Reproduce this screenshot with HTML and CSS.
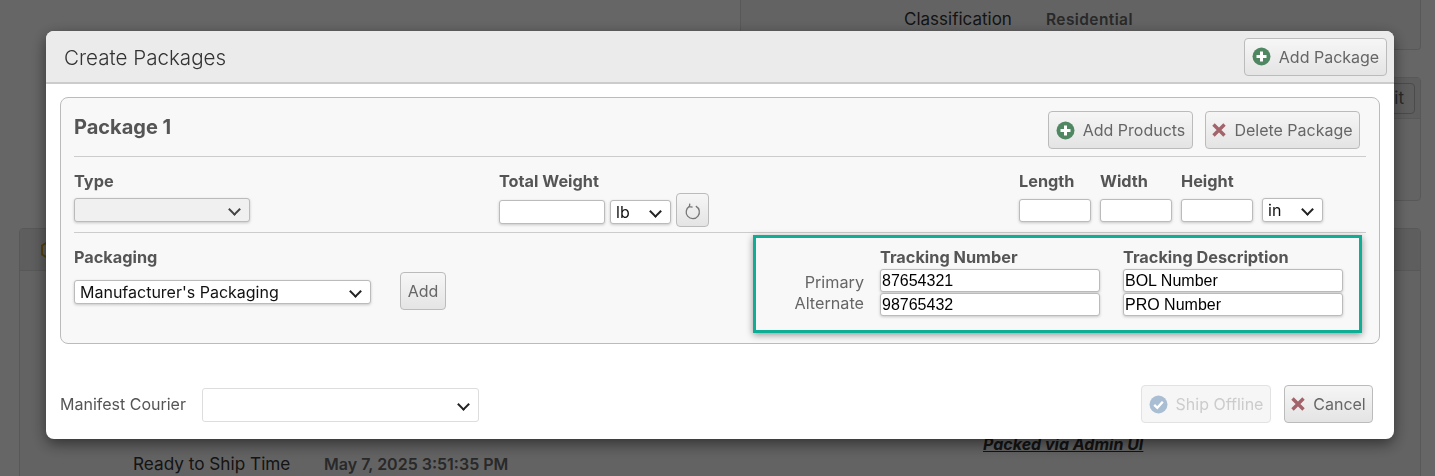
FILE: index.html
```html
<!DOCTYPE html>
<html lang="en">
<head>
<meta charset="utf-8">
<title>Create Packages</title>
<link rel="stylesheet" href="styles.css">
</head>
<body>
<div class="page">
  <div class="side-stack">
    <section class="bg-panel bg-panel-cut">
      <div class="class-row"><span class="class-name">Classification</span><strong class="class-value">Residential</strong></div>
    </section>
    <section class="bg-panel bg-panel-two">
      <div class="bg-head bg-head-short"><span class="bg-edit">Edit</span></div>
    </section>
  </div>
  <section class="bg-panel bg-panel-wide">
    <div class="bg-head">
      <svg class="bg-icon" width="18" height="20" viewBox="0 0 18 20"><path d="M9 1.500 16 5.500V14.500L9 18.500 2 14.500V5.500Z" fill="none" stroke="#d9a520" stroke-width="2"/></svg>
    </div>
    <div class="bg-body">
      <div class="bg-left"><span class="ship-name">Ready to Ship Time</span><strong class="ship-value">May 7, 2025 3:51:35 PM</strong></div>
      <div class="bg-right"><span class="packed">Packed via Admin UI</span></div>
    </div>
  </section>
</div>
<div class="overlay"></div>
<div class="modal">
  <header class="modal-head">
    <h1 class="modal-title">Create Packages</h1>
    <button class="btn btn-head" type="button">
      <svg class="ico" width="19" height="19" viewBox="0 0 19 19"><circle cx="9.500" cy="9.500" r="9" fill="#4f8763"/><path d="M9.500 4.500v10M4.500 9.500h10" stroke="#fff" stroke-width="3"/></svg>
      Add Package
    </button>
  </header>
  <div class="modal-body">
    <section class="pkg">
      <div class="pkg-top">
        <h2 class="pkg-title">Package 1</h2>
        <div class="pkg-actions">
          <button class="btn btn-products" type="button">
            <svg class="ico" width="19" height="19" viewBox="0 0 19 19"><circle cx="9.500" cy="9.500" r="9" fill="#4f8763"/><path d="M9.500 4.500v10M4.500 9.500h10" stroke="#fff" stroke-width="3"/></svg>
            Add Products
          </button>
          <button class="btn btn-delete" type="button">
            <svg class="ico" width="14" height="14" viewBox="0 0 14 14"><path d="M1.500 1.500 12.500 12.500M12.500 1.500 1.500 12.500" stroke="#a3636b" stroke-width="3.400"/></svg>
            Delete Package
          </button>
        </div>
      </div>
      <div class="pkg-fields">
        <div class="field">
          <label class="lbl">Type</label>
          <span class="sw sw-type"><select class="sel sel-type" disabled><option></option></select></span>
        </div>
        <div class="field">
          <label class="lbl">Total Weight</label>
          <div class="inline">
            <input class="inp inp-weight" type="text">
            <span class="sw sw-unit"><select class="sel sel-unit"><option>lb</option></select></span>
            <button class="btn btn-refresh" type="button" aria-label="Refresh">
              <svg width="16" height="17" viewBox="0 0 16 17"><path d="M10.800 3.200A6.600 6.600 0 1 1 4.400 3.400" fill="none" stroke="#777" stroke-width="1.300"/><path d="M4.800 .6 4.400 3.600 7.600 4.200" fill="none" stroke="#777" stroke-width="1.300"/></svg>
            </button>
          </div>
        </div>
        <div class="dims">
          <div class="field dim"><label class="lbl">Length</label><input class="inp inp-dim" type="text"></div>
          <div class="field dim"><label class="lbl">Width</label><input class="inp inp-dim" type="text"></div>
          <div class="field dim"><label class="lbl">Height</label><input class="inp inp-dim" type="text"></div>
          <span class="sw"><select class="sel sel-unit"><option>in</option></select></span>
        </div>
      </div>
      <div class="pkg-bottom">
        <div class="packaging">
          <div class="field">
            <label class="lbl lbl-pack">Packaging</label>
            <span class="sw sw-pack"><select class="sel sel-pack"><option>Manufacturer's Packaging</option></select></span>
          </div>
          <button class="btn btn-add" type="button">Add</button>
        </div>
        <div class="tracking">
          <span></span>
          <span class="lbl track-head">Tracking Number</span>
          <span class="lbl track-head">Tracking Description</span>
          <span class="track-name track-primary">Primary</span>
          <input class="inp inp-track" type="text" value="87654321">
          <input class="inp inp-track" type="text" value="BOL Number">
          <span class="track-name track-alt">Alternate</span>
          <input class="inp inp-track" type="text" value="98765432">
          <input class="inp inp-track" type="text" value="PRO Number">
        </div>
      </div>
    </section>
    <footer class="modal-foot">
      <label class="foot-lbl">Manifest Courier</label>
      <span class="sw sw-courier"><select class="sel sel-courier"><option></option></select></span>
      <div class="foot-actions">
        <button class="btn btn-ship" type="button" disabled>
          <svg class="ico" width="19" height="19" viewBox="0 0 19 19"><circle cx="9.500" cy="9.500" r="9" fill="#a9bed3"/><path d="M5.200 9.800 8.300 12.800 13.800 6.800" fill="none" stroke="#fff" stroke-width="2.400"/></svg>
          Ship Offline
        </button>
        <button class="btn btn-cancel" type="button">
          <svg class="ico" width="14" height="14" viewBox="0 0 14 14"><path d="M1.500 1.500 12.500 12.500M12.500 1.500 1.500 12.500" stroke="#a3636b" stroke-width="3.400"/></svg>
          Cancel
        </button>
      </div>
    </footer>
  </div>
</div>
</body>
</html>
```

FILE: styles.css
```css
* { box-sizing: border-box; }
html, body { margin: 0; height: 476px; overflow: hidden; background: #fff; }
body { font-family: Inter, "Liberation Sans", sans-serif; color: #333; }

/* page behind the dialog */
.page { height: 476px; padding: 0 14px 0 19px; overflow: hidden; }
.side-stack { margin-left: 721px; }
.bg-panel { background: #f8f8f8; border: 1px solid #ddd; border-radius: 4px; }
.bg-panel-cut { height: 50px; border-top: 0; border-radius: 0 0 4px 4px; }
.bg-panel-two { height: 124px; margin-top: 27px; }
.class-row { display: flex; padding: 6px 0 0 163px; align-items: center; height: 32px; }
.class-name { width: 142px; font-size: 17px; }
.class-value { font-size: 15.500px; letter-spacing: .4px; color: #666; font-weight: 600; }
.bg-head { height: 42px; background: #ebebeb; border-bottom: 1px solid #ddd; display: flex; align-items: center; justify-content: flex-end; padding: 0 20px; }
.bg-head-short { height: 41px; padding: 0 5px 0 0; }
.bg-edit { font-size: 17px; padding: 4px 10px; border: 1px solid #bbb; border-radius: 4px; color: #666; height: 31px; }
.bg-panel-wide { margin-top: 27px; height: 300px; }
.bg-panel-wide .bg-head { justify-content: flex-start; }
.bg-body { display: grid; grid-template-columns: 963px 1fr; }
.bg-left { padding: 182px 0 0 113px; display: flex; align-items: center; }
.ship-name { width: 191px; font-size: 17.200px; }
.ship-value { font-size: 16px; color: #666; font-weight: 600; }
.bg-right { padding-top: 163px; }
.packed { font-size: 16px; font-weight: 700; font-style: italic; text-decoration: underline; color: #333; }

.overlay { position: fixed; inset: 0; background: rgba(0, 0, 0, .6); }

/* dialog */
.modal { position: fixed; left: 46px; top: 31px; width: 1348px; height: 408px; background: #fff; border-radius: 8px; box-shadow: 0 5px 15px rgba(0, 0, 0, .5); overflow: hidden; }
.modal-head { height: 53px; display: flex; align-items: center; justify-content: space-between; padding: 0 7px 1px 18px; background: #ebebeb; border-bottom: 2px solid #ccc; }
.modal-title { margin: 2px 0 0; font-size: 20.600px; font-weight: 300; color: #333; }
.modal-body { padding: 13px 14px 0; }

.btn { display: inline-flex; align-items: center; justify-content: center; gap: 8px; height: 38px; padding: 0; font: 400 16px Inter, "Liberation Sans", sans-serif; color: #666; background: linear-gradient(#f6f6f6, #e4e4e4); border: 1px solid #bbb; border-radius: 4px; }
.btn-head { width: 143px; margin-top: 1px; }
.btn-products { width: 145px; }
.btn-delete { width: 155px; }
.btn-refresh { width: 33px; height: 34px; margin-top: -7px; padding-top: 3px; }
.btn-add { width: 46px; margin: 25px 0 0 29px; }
.btn-ship { width: 130px; color: #ccc; background: #f6f6f6; border-color: #e2e2e2; }
.btn-cancel { width: 89px; }

.pkg { height: 247px; padding: 0 13px; background: #f8f8f8; border: 1px solid #bbb; border-radius: 8px; }
.pkg-top { height: 59px; display: flex; justify-content: space-between; padding: 13px 6px 0 0; border-bottom: 1px solid #ccc; }
.pkg-title { margin: 4px 0 0; font-size: 20px; font-weight: 700; color: #555; }
.pkg-actions { display: flex; gap: 12px; }
.pkg-fields { height: 76px; display: grid; grid-template-columns: 425px 520px 1fr; padding-top: 14px; border-bottom: 1px solid #ccc; }
.field { display: flex; flex-direction: column; align-items: flex-start; }
.lbl { font-size: 16.300px; font-weight: 700; color: #555; line-height: 20px; }
.inline { display: flex; gap: 5px; margin-top: 9px; align-items: flex-start; }
.dims { display: flex; gap: 9px; align-items: flex-end; padding-bottom: 10px; }
.dim { gap: 8px; }

/* selects carry their own chevron */
.sw { position: relative; display: block; }
.sw::after { content: ""; position: absolute; right: 11px; top: 50%; width: 7px; height: 7px; margin-top: -5px; border: solid #222; border-width: 0 2.200px 2.200px 0; transform: rotate(45deg); pointer-events: none; }
.sw-type { margin-top: 7px; }
.sw-type::after { border-color: #444; }
.sw-pack { margin-top: 13px; }
.sw-courier { margin: 2px 0 0 16px; }
.sel { display: block; appearance: none; font: 400 16px Inter, "Liberation Sans", sans-serif; color: #111; background: #fff; border: 1px solid #bbb; border-radius: 3px; box-shadow: 0 1px 3px rgba(0, 0, 0, .2); padding: 0 22px 0 5px; }
.sel-type { width: 176px; height: 24px; background: #f0f0f0; opacity: 1; }
.sel-unit { width: 61px; height: 24px; }
.sel-pack { width: 297px; height: 24px; }
.sel-courier { width: 277px; height: 34px; border-color: #ddd; box-shadow: none; }

.inp { height: 24px; padding: 0 1px; font: 400 16px "Liberation Sans", Arial, sans-serif; color: #000; background: #fff; border: 1px solid #bbb; border-radius: 3px; box-shadow: 0 1px 3px rgba(0, 0, 0, .2); }
.inp-weight { width: 106px; }
.inp-dim { width: 72px; height: 23px; }
.inp-track { width: 220px; height: 23px; }

.pkg-bottom { display: flex; justify-content: space-between; padding: 2px 4px 0 0; }
.packaging { display: flex; align-items: flex-start; padding-top: 12px; }
.lbl-pack { height: 20px; }

.tracking { width: 609px; height: 98px; display: grid; grid-template-columns: 108px 220px 220px; grid-auto-rows: 23px; column-gap: 16px; row-gap: 1px; align-content: start; padding: 7px 0 0 0; border: 3px solid #0dae93; box-shadow: 0 2px 7px rgba(0, 0, 0, .4); }
.tracking > :nth-child(3n) { margin-left: 7px; }
.track-head { line-height: 24px; }
.track-name { font-size: 16.200px; color: #666; text-align: right; line-height: 22px; }
.track-primary { padding-top: 2px; }
.track-alt { margin-top: -1px; }

.modal-foot { display: flex; align-items: center; padding: 41px 7px 0 0; }
.foot-lbl { font-size: 16px; color: #555; }
.foot-actions { margin-left: auto; display: flex; gap: 13px; }
```
